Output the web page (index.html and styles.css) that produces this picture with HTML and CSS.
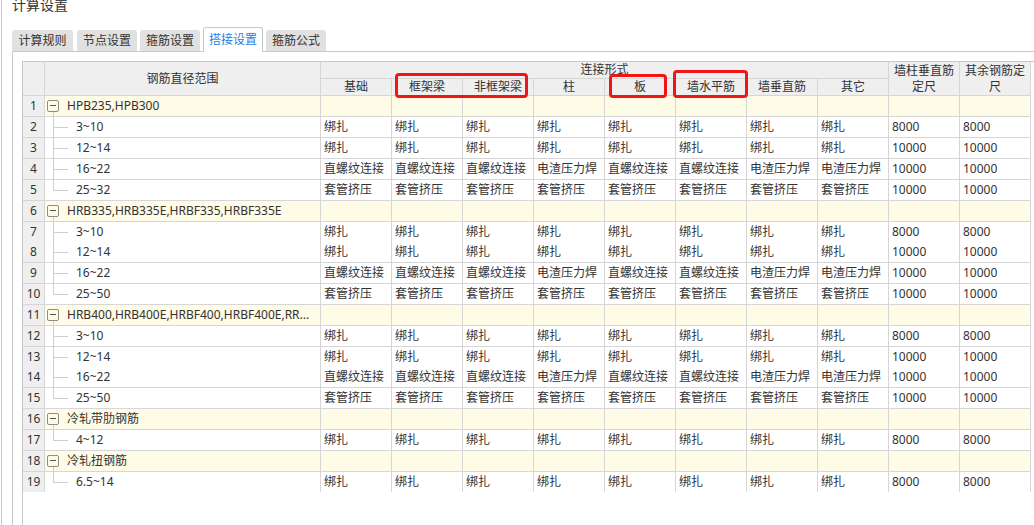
FILE: index.html
```html
<!DOCTYPE html>
<html lang="zh-CN">
<head>
<meta charset="utf-8">
<title>计算设置</title>
<link rel="stylesheet" href="styles.css">
</head>
<body>
<div class="page">
  <div class="title">计算设置</div>
  <div class="tabs">
    <div class="tab">计算规则</div>
    <div class="tab">节点设置</div>
    <div class="tab">箍筋设置</div>
    <div class="tab active">搭接设置</div>
    <div class="tab">箍筋公式</div>
  </div>
  <div class="panel">
    <div class="grid-wrap">
      <div class="table">
        <div class="head">
          <div class="h n-h"></div>
          <div class="h name-h">钢筋直径范围</div>
          <div class="h group-h">连接形式</div>
          <div class="h span2 wrap">墙柱垂直筋定尺</div>
          <div class="h span2 wrap">其余钢筋定尺</div>
          <div class="h">基础</div>
          <div class="h">框架梁</div>
          <div class="h">非框架梁</div>
          <div class="h">柱</div>
          <div class="h">板</div>
          <div class="h">墙水平筋</div>
          <div class="h">墙垂直筋</div>
          <div class="h">其它</div>
        </div>

        <div class="row group"><div class="c n">1</div><div class="c name"><span class="toggle"></span>HPB235,HPB300</div><div class="c"></div><div class="c"></div><div class="c"></div><div class="c"></div><div class="c"></div><div class="c"></div><div class="c"></div><div class="c"></div><div class="c"></div><div class="c"></div></div>
        <div class="row child"><div class="c n">2</div><div class="c name">3~10</div><div class="c">绑扎</div><div class="c">绑扎</div><div class="c">绑扎</div><div class="c">绑扎</div><div class="c">绑扎</div><div class="c">绑扎</div><div class="c">绑扎</div><div class="c">绑扎</div><div class="c">8000</div><div class="c">8000</div></div>
        <div class="row child"><div class="c n">3</div><div class="c name">12~14</div><div class="c">绑扎</div><div class="c">绑扎</div><div class="c">绑扎</div><div class="c">绑扎</div><div class="c">绑扎</div><div class="c">绑扎</div><div class="c">绑扎</div><div class="c">绑扎</div><div class="c">10000</div><div class="c">10000</div></div>
        <div class="row child"><div class="c n">4</div><div class="c name">16~22</div><div class="c">直螺纹连接</div><div class="c">直螺纹连接</div><div class="c">直螺纹连接</div><div class="c">电渣压力焊</div><div class="c">直螺纹连接</div><div class="c">直螺纹连接</div><div class="c">电渣压力焊</div><div class="c">电渣压力焊</div><div class="c">10000</div><div class="c">10000</div></div>
        <div class="row child last"><div class="c n">5</div><div class="c name">25~32</div><div class="c">套管挤压</div><div class="c">套管挤压</div><div class="c">套管挤压</div><div class="c">套管挤压</div><div class="c">套管挤压</div><div class="c">套管挤压</div><div class="c">套管挤压</div><div class="c">套管挤压</div><div class="c">10000</div><div class="c">10000</div></div>

        <div class="row group"><div class="c n">6</div><div class="c name"><span class="toggle"></span>HRB335,HRB335E,HRBF335,HRBF335E</div><div class="c"></div><div class="c"></div><div class="c"></div><div class="c"></div><div class="c"></div><div class="c"></div><div class="c"></div><div class="c"></div><div class="c"></div><div class="c"></div></div>
        <div class="row child"><div class="c n">7</div><div class="c name">3~10</div><div class="c">绑扎</div><div class="c">绑扎</div><div class="c">绑扎</div><div class="c">绑扎</div><div class="c">绑扎</div><div class="c">绑扎</div><div class="c">绑扎</div><div class="c">绑扎</div><div class="c">8000</div><div class="c">8000</div></div>
        <div class="row child"><div class="c n">8</div><div class="c name">12~14</div><div class="c">绑扎</div><div class="c">绑扎</div><div class="c">绑扎</div><div class="c">绑扎</div><div class="c">绑扎</div><div class="c">绑扎</div><div class="c">绑扎</div><div class="c">绑扎</div><div class="c">10000</div><div class="c">10000</div></div>
        <div class="row child"><div class="c n">9</div><div class="c name">16~22</div><div class="c">直螺纹连接</div><div class="c">直螺纹连接</div><div class="c">直螺纹连接</div><div class="c">电渣压力焊</div><div class="c">直螺纹连接</div><div class="c">直螺纹连接</div><div class="c">电渣压力焊</div><div class="c">电渣压力焊</div><div class="c">10000</div><div class="c">10000</div></div>
        <div class="row child last"><div class="c n">10</div><div class="c name">25~50</div><div class="c">套管挤压</div><div class="c">套管挤压</div><div class="c">套管挤压</div><div class="c">套管挤压</div><div class="c">套管挤压</div><div class="c">套管挤压</div><div class="c">套管挤压</div><div class="c">套管挤压</div><div class="c">10000</div><div class="c">10000</div></div>

        <div class="row group"><div class="c n">11</div><div class="c name"><span class="toggle"></span>HRB400,HRB400E,HRBF400,HRBF400E,RR...</div><div class="c"></div><div class="c"></div><div class="c"></div><div class="c"></div><div class="c"></div><div class="c"></div><div class="c"></div><div class="c"></div><div class="c"></div><div class="c"></div></div>
        <div class="row child"><div class="c n">12</div><div class="c name">3~10</div><div class="c">绑扎</div><div class="c">绑扎</div><div class="c">绑扎</div><div class="c">绑扎</div><div class="c">绑扎</div><div class="c">绑扎</div><div class="c">绑扎</div><div class="c">绑扎</div><div class="c">8000</div><div class="c">8000</div></div>
        <div class="row child"><div class="c n">13</div><div class="c name">12~14</div><div class="c">绑扎</div><div class="c">绑扎</div><div class="c">绑扎</div><div class="c">绑扎</div><div class="c">绑扎</div><div class="c">绑扎</div><div class="c">绑扎</div><div class="c">绑扎</div><div class="c">10000</div><div class="c">10000</div></div>
        <div class="row child"><div class="c n">14</div><div class="c name">16~22</div><div class="c">直螺纹连接</div><div class="c">直螺纹连接</div><div class="c">直螺纹连接</div><div class="c">电渣压力焊</div><div class="c">直螺纹连接</div><div class="c">直螺纹连接</div><div class="c">电渣压力焊</div><div class="c">电渣压力焊</div><div class="c">10000</div><div class="c">10000</div></div>
        <div class="row child last"><div class="c n">15</div><div class="c name">25~50</div><div class="c">套管挤压</div><div class="c">套管挤压</div><div class="c">套管挤压</div><div class="c">套管挤压</div><div class="c">套管挤压</div><div class="c">套管挤压</div><div class="c">套管挤压</div><div class="c">套管挤压</div><div class="c">10000</div><div class="c">10000</div></div>

        <div class="row group"><div class="c n">16</div><div class="c name"><span class="toggle"></span>冷轧带肋钢筋</div><div class="c"></div><div class="c"></div><div class="c"></div><div class="c"></div><div class="c"></div><div class="c"></div><div class="c"></div><div class="c"></div><div class="c"></div><div class="c"></div></div>
        <div class="row child last"><div class="c n">17</div><div class="c name">4~12</div><div class="c">绑扎</div><div class="c">绑扎</div><div class="c">绑扎</div><div class="c">绑扎</div><div class="c">绑扎</div><div class="c">绑扎</div><div class="c">绑扎</div><div class="c">绑扎</div><div class="c">8000</div><div class="c">8000</div></div>

        <div class="row group"><div class="c n">18</div><div class="c name"><span class="toggle"></span>冷轧扭钢筋</div><div class="c"></div><div class="c"></div><div class="c"></div><div class="c"></div><div class="c"></div><div class="c"></div><div class="c"></div><div class="c"></div><div class="c"></div><div class="c"></div></div>
        <div class="row child last"><div class="c n">19</div><div class="c name">6.5~14</div><div class="c">绑扎</div><div class="c">绑扎</div><div class="c">绑扎</div><div class="c">绑扎</div><div class="c">绑扎</div><div class="c">绑扎</div><div class="c">绑扎</div><div class="c">绑扎</div><div class="c">8000</div><div class="c">8000</div></div>
      </div>
    </div>
  </div>
</div>
<div class="mark mark-beam"></div>
<div class="mark mark-slab"></div>
<div class="mark mark-wall"></div>
</body>
</html>
```
FILE: styles.css
```css
html, body {
  margin: 0;
  padding: 0;
  background: #ffffff;
}
body {
  position: relative;
  width: 1034px;
  height: 525px;
  overflow: hidden;
  font-family: "Noto Sans", "Noto Sans CJK SC", sans-serif;
  font-size: 12px;
  color: #333333;
}
.page {
  margin-left: 1px;
  border-left: 1px solid #c8c8c8;
  padding-left: 10px;
  height: 525px;
  box-sizing: border-box;
  display: flex;
  flex-direction: column;
}
.title {
  margin-top: -5px;
  height: 20px;
  line-height: 20px;
  font-size: 14px;
  color: #333333;
}
.tabs {
  margin-top: 12px;
  height: 24px;
  display: flex;
  align-items: flex-end;
  gap: 3px;
  position: relative;
  z-index: 2;
}
.tab {
  width: 60px;
  height: 21px;
  line-height: 21px;
  text-align: center;
  background: #e1e1e1;
  border-radius: 3px 3px 0 0;
  color: #333333;
  font-size: 12px;
}
.tab:first-child {
  width: 61px;
  margin-right: 1px;
}
.tab.active {
  height: 25px;
  line-height: 24px;
  margin-bottom: -1px;
  background: #ffffff;
  border: 1px solid #c8c8c8;
  border-bottom: none;
  box-sizing: border-box;
  color: #1f7fe3;
}
.panel {
  flex: 1;
  border-top: 1px solid #c8c8c8;
  border-left: 1px solid #c8c8c8;
  padding: 9px 0 0 9px;
  display: flex;
  flex-direction: column;
}
.grid-wrap {
  flex: 1;
  border-left: 1px solid #c8c8c8;
  border-top: 1px solid #c8c8c8;
}
.table {
  width: max-content;
  display: flex;
  flex-direction: column;
  gap: 1px;
  background: #d6d6d6;
  padding: 0 1px 1px 0;
}
.head,
.row {
  display: grid;
  grid-template-columns: 21px 275px repeat(10, 70px);
  column-gap: 1px;
}
.head {
  grid-template-rows: 16px 16px;
  row-gap: 1px;
}
.h {
  background: #efefef;
  text-align: center;
  line-height: 16px;
  display: flex;
  align-items: center;
  justify-content: center;
  overflow: hidden;
}
.n-h,
.name-h,
.span2 {
  grid-row: span 2;
}
.group-h {
  grid-column: span 8;
}
.wrap {
  padding: 0 4px;
  white-space: normal;
}
.row {
  height: 20px;
}
.table > .row:nth-child(6n+8) {
  height: 19px;
}
.c {
  background: #ffffff;
  padding: 0 3px;
  line-height: 20px;
  white-space: nowrap;
  overflow: hidden;
  display: flex;
  align-items: center;
}
.c.n {
  background: #efefef;
  justify-content: center;
  padding: 0;
}
.group .c {
  background: #fefbe6;
}
.group .c.n {
  background: #efefef;
}
.c.name {
  position: relative;
  overflow: visible;
}
.group .c.name {
  padding-left: 2px;
}
.child .c.name {
  padding-left: 31px;
}
.toggle {
  position: relative;
  width: 12px;
  height: 12px;
  box-sizing: border-box;
  border: 1px solid #8c8c8c;
  border-radius: 2px;
  margin-right: 8px;
  flex: none;
}
.toggle::after {
  content: "";
  position: absolute;
  left: 2px;
  right: 2px;
  top: 4px;
  height: 1px;
  background: #555555;
}
.group .c.name::after {
  content: "";
  position: absolute;
  left: 8px;
  width: 1px;
  top: 16px;
  bottom: -1px;
  background: #cfcfcf;
}
.child .c.name::before {
  content: "";
  position: absolute;
  left: 8px;
  width: 1px;
  top: 0;
  bottom: -1px;
  background: #cfcfcf;
}
.child.last .c.name::before {
  bottom: 50%;
}
.child .c.name::after {
  content: "";
  position: absolute;
  left: 8px;
  width: 15px;
  height: 1px;
  top: 50%;
  background: #cfcfcf;
}
.mark {
  position: absolute;
  border: 3px solid #f01616;
  border-radius: 4px;
  box-sizing: border-box;
  z-index: 5;
}
.mark-beam {
  left: 395px;
  top: 73px;
  width: 133px;
  height: 25px;
}
.mark-slab {
  left: 609px;
  top: 74px;
  width: 58px;
  height: 24px;
}
.mark-wall {
  left: 673px;
  top: 70px;
  width: 75px;
  height: 28px;
}
```
